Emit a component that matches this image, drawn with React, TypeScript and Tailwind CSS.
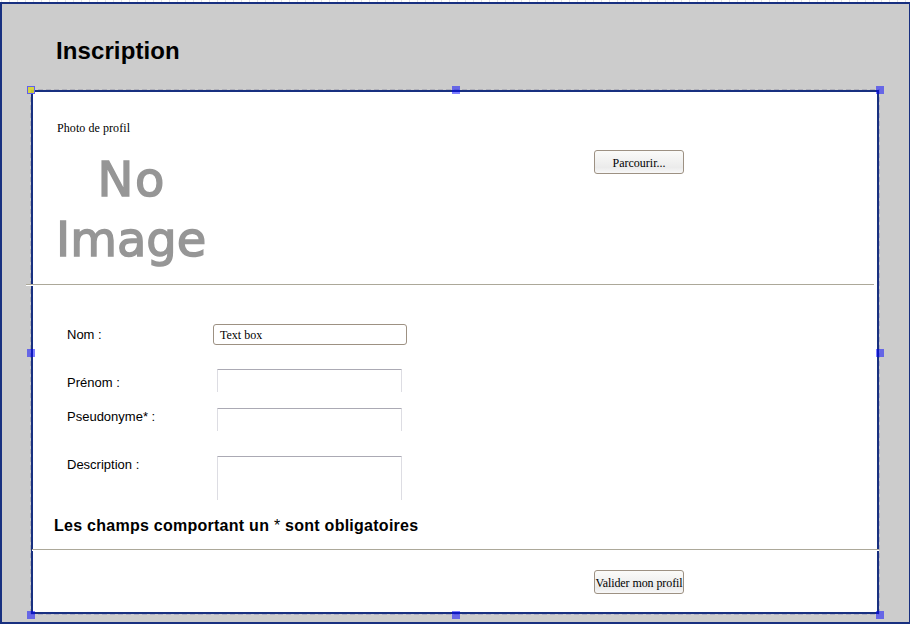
import React from "react";

const HANDLES = [
  "left-[27px] top-[86px] bg-[#d6d630]/90 border border-[#6060f0]",
  "left-[452px] top-[86px] bg-[#0000ff]/50",
  "left-[876px] top-[86px] bg-[#0000ff]/50",
  "left-[27px] top-[349px] bg-[#0000ff]/50",
  "left-[876px] top-[349px] bg-[#0000ff]/50",
  "left-[27px] top-[611px] bg-[#0000ff]/50",
  "left-[452px] top-[611px] bg-[#0000ff]/50",
  "left-[876px] top-[611px] bg-[#0000ff]/50",
];

// Dashed selection outline, one strip per side of the panel.
const DASHES = [
  "left-[30px] top-[89px] h-px w-[850px] bg-[repeating-linear-gradient(to_right,#b0b0b8_0px,#b0b0b8_5px,#cccccc_5px,#cccccc_8px)]",
  "left-[30px] top-[614px] h-px w-[850px] bg-[repeating-linear-gradient(to_right,#b0b0c4_0px,#b0b0c4_5px,#cccccc_5px,#cccccc_8px)]",
  "left-[30px] top-[89px] h-[526px] w-px bg-[repeating-linear-gradient(to_bottom,#b0b0b8_0px,#b0b0b8_5px,#cccccc_5px,#cccccc_8px)]",
  "left-[879px] top-[89px] h-[526px] w-px bg-[repeating-linear-gradient(to_bottom,#b0b0c4_0px,#b0b0c4_5px,#cccccc_5px,#cccccc_8px)]",
];

function Button({ className = "", children }: { className?: string; children: React.ReactNode }) {
  return (
    <button
      className={`flex h-6 w-[90px] items-center justify-center whitespace-nowrap rounded-[3px] border border-[#9d9183] bg-linear-to-b from-[#fbfbf9] via-[#ebebeb] via-75% to-[#f8f8f8] pt-px font-['Liberation_Serif',serif] text-[12px] leading-4 ${className}`}
    >
      {children}
    </button>
  );
}

function Label({ className, children }: { className: string; children: React.ReactNode }) {
  return (
    <label className={`w-[150px] shrink-0 whitespace-nowrap text-[13px] leading-4 ${className}`}>
      {children}
    </label>
  );
}

function Field({ className }: { className: string }) {
  return (
    <div
      className={`w-[185px] rounded-t-[1px] border-x border-t border-x-[#dddde3] border-t-[#abaab4] bg-white ${className}`}
    />
  );
}

export default function App() {
  return (
    <div className="relative flex h-[624px] w-[910px] flex-col overflow-hidden bg-white font-['Liberation_Sans',Arial,sans-serif] text-black">
      <div className="h-[2px] shrink-0 bg-[repeating-linear-gradient(to_right,#fff_0px,#fff_1px,#e2e2e8_1px,#e2e2e8_2px,#fff_2px,#fff_8px)]" />
      <div className="flex h-[622px] flex-col border-2 border-r border-[#183080] bg-[#cccccc]">
        <header className="h-[86px] shrink-0 pl-[54px] pt-[33px]">
          <h1 className="text-[24px] font-bold leading-7 tracking-[0.1px]">Inscription</h1>
        </header>

        <main className="ml-[29px] h-[524px] w-[848px] shrink-0 border-2 border-[#183080] bg-white">
          <section className="flex h-[192px] pl-6 pt-7">
            <div className="w-[537px]">
              <p className="font-['Liberation_Serif',serif] text-[12px] leading-4 tracking-[0.07px]">
                Photo de profil
              </p>
              <div className="mt-[13px] w-[152px] whitespace-nowrap font-['DejaVu_Sans',sans-serif] text-[48px] leading-[60px] text-[#969696] [-webkit-text-stroke:1.5px_#969696]">
                <div className="blur-[0.6px]">
                  <div className="pl-[40.5px] tracking-[1.5px]">No</div>
                  <div className="-ml-px">Image</div>
                </div>
              </div>
            </div>
            <div className="pt-[30px]">
              <Button>Parcourir...</Button>
            </div>
          </section>

          <div className="relative z-10 -ml-[7px] h-[2px] w-[848px] border-t border-[#aca899] bg-white" />

          <section className="h-[263px] pl-[34px] pt-[38px]">
            <div className="flex">
              <Label className="mr-[-4px] pt-[3px]">Nom :</Label>
              <div className="flex h-[21px] w-[194px] items-center rounded-[3px] border border-[#9d9183] bg-white pl-[6px] pt-px font-['Liberation_Serif',serif] text-[12px] leading-4">
                Text box
              </div>
            </div>
            <div className="mt-6 flex">
              <Label className="pt-[6px]">Prénom :</Label>
              <Field className="h-[23px]" />
            </div>
            <div className="mt-4 flex">
              <Label className="pt-px">Pseudonyme* :</Label>
              <Field className="h-[23px]" />
            </div>
            <div className="mt-[25px] flex">
              <Label className="pt-px">Description :</Label>
              <Field className="h-[44px]" />
            </div>
            <p className="-ml-[13px] mt-[16px] text-[16px] font-bold leading-5 tracking-[0.26px]">
              Les champs comportant un <span className="font-normal">*</span> sont obligatoires
            </p>
          </section>

          <div className="relative z-10 -ml-px h-[2px] w-[847px] border-t border-[#aca899] bg-white" />

          <section className="pl-[561px] pt-[19px]">
            <Button className="tracking-[-0.08px]">Valider mon profil</Button>
          </section>
        </main>
      </div>

      {DASHES.map((dash) => (
        <span key={dash} className={`absolute ${dash}`} />
      ))}
      {HANDLES.map((handle) => (
        <span key={handle} className={`absolute z-20 size-2 ${handle}`} />
      ))}
    </div>
  );
}
